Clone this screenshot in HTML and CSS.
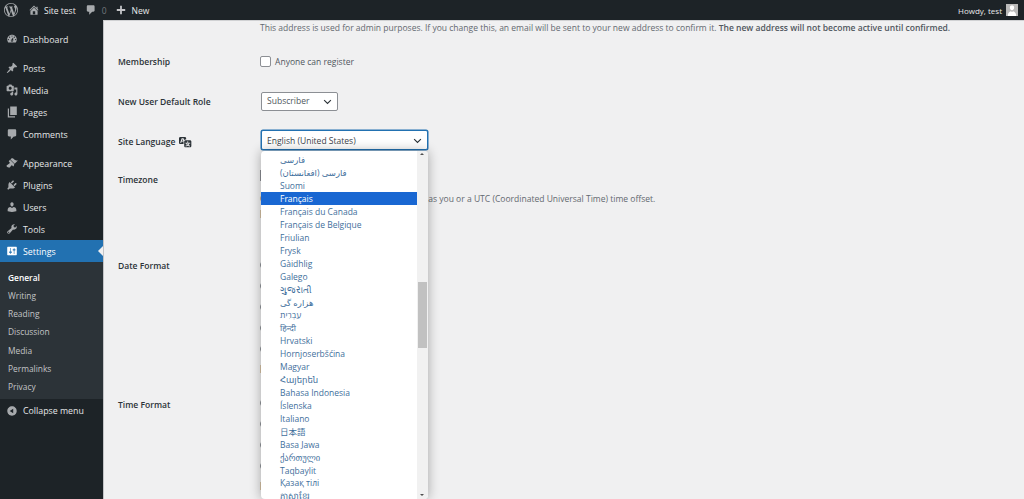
FILE: index.html
```html
<!DOCTYPE html>
<html lang="en">
<head>
<meta charset="utf-8">
<title>General Settings</title>
<link rel="stylesheet" href="styles.css">
</head>
<body>
<header class="adminbar">
  <svg class="bar-logo" viewBox="0 0 20 20"><path d="M20 10c0-5.51-4.49-10-10-10C4.48 0 0 4.49 0 10c0 5.52 4.48 10 10 10 5.51 0 10-4.48 10-10zM7.78 15.37L4.37 6.22c.55-.02 1.17-.08 1.17-.08.5-.06.44-1.13-.06-1.11 0 0-1.45.11-2.37.11-.18 0-.37 0-.58-.01C4.12 2.69 6.87 1.11 10 1.11c2.33 0 4.45.87 6.05 2.34-.68-.11-1.65.39-1.65 1.58 0 .74.45 1.36.9 2.1.35.61.55 1.36.55 2.46 0 1.49-1.4 5-1.4 5l-3.03-8.37c.54-.02.82-.17.82-.17.5-.05.44-1.25-.06-1.22 0 0-1.44.12-2.38.12-.87 0-2.33-.12-2.33-.12-.5-.03-.56 1.2-.06 1.22l.92.08 1.26 3.41zM17.41 10c.24-.64.74-1.87.43-4.25.7 1.29 1.05 2.71 1.05 4.25 0 3.29-1.73 6.24-4.4 7.78.97-2.59 1.94-5.2 2.92-7.78zM6.1 18.09C3.12 16.65 1.11 13.53 1.11 10c0-1.3.23-2.48.72-3.59C3.25 10.3 4.67 14.2 6.1 18.09zm4.03-6.63l2.58 6.98c-.86.29-1.76.45-2.71.45-.79 0-1.57-.11-2.29-.33.81-2.38 1.62-4.74 2.42-7.1z"/></svg>
  <span class="bar-item bar-site"><svg class="bar-ico" viewBox="0 0 20 20"><path d="M16 8.5l1.53 1.53-1.06 1.06L10 4.62l-6.47 6.47-1.06-1.06L10 2.5l4 4v-2h2v4zm-6-2.46l6 5.99V18H4v-5.97zM12 17v-5H8v5h4z"/></svg>Site test</span>
  <span class="bar-item bar-comments"><svg class="bar-ico" viewBox="0 0 20 20"><path d="M5 2h9c1.1 0 2 .9 2 2v7c0 1.1-.9 2-2 2h-2l-5 5v-5H5c-1.1 0-2-.9-2-2V4c0-1.1.9-2 2-2z"/></svg><span class="muted">0</span></span>
  <span class="bar-item bar-new"><svg class="bar-ico" viewBox="0 0 20 20"><path d="M17 8.5v3h-5.5V17h-3v-5.5H3v-3h5.5V3h3v5.5z"/></svg>New</span>
  <span class="howdy">Howdy, test<span class="avatar"><svg viewBox="0 0 20 20"><path d="M10 10.5c-2.4 0-3.6-2.4-3.6-4.6C6.4 3.7 7.8 2.6 10 2.6s3.6 1.1 3.6 3.3c0 2.2-1.2 4.6-3.6 4.6zM3 20c0-5 2.5-7.5 5-8l2 1.500 2-1.500c2.500.5 5 3 5 8z"/></svg></span></span>
</header>

<div class="shell">
  <nav class="sidebar">
    <a class="mi"><svg viewBox="0 0 20 20"><path d="M3.76 16h12.48c1.1-1.37 1.76-3.11 1.76-5 0-4.42-3.58-8-8-8s-8 3.58-8 8c0 1.89.66 3.63 1.76 5zM10 4c.55 0 1 .45 1 1s-.45 1-1 1-1-.45-1-1 .45-1 1-1zM6 6c.55 0 1 .45 1 1s-.45 1-1 1-1-.45-1-1 .45-1 1-1zm8 0c.55 0 1 .45 1 1s-.45 1-1 1-1-.45-1-1 .45-1 1-1zm-5.37 5.55L12 7v6c0 1.1-.9 2-2 2s-2-.9-2-2c0-.57.24-1.08.63-1.45zM4 10c.55 0 1 .45 1 1s-.45 1-1 1-1-.45-1-1 .45-1 1-1zm12 0c.55 0 1 .45 1 1s-.45 1-1 1-1-.45-1-1 .45-1 1-1zm-5 3c0-.55-.45-1-1-1s-1 .45-1 1 .45 1 1 1 1-.45 1-1z"/></svg>Dashboard</a>
    <a class="mi sep"><svg viewBox="0 0 20 20"><path d="M10.44 3.02l1.82-1.82 6.36 6.35-1.83 1.82c-1.05-.68-2.48-.57-3.41.36l-.75.75c-.92.93-1.04 2.35-.35 3.41l-1.83 1.82-2.41-2.41-2.8 2.79c-.42.42-3.38 2.71-3.8 2.29s1.86-3.39 2.28-3.81l2.79-2.79L4.1 9.36l1.83-1.82c1.05.69 2.48.57 3.4-.36l.75-.75c.93-.92 1.05-2.35.36-3.41z"/></svg>Posts</a>
    <a class="mi"><svg viewBox="0 0 20 20"><path d="M13 11V4c0-.55-.45-1-1-1h-1.67L9 1H5L3.67 3H2c-.55 0-1 .45-1 1v7c0 .55.45 1 1 1h10c.55 0 1-.45 1-1zM7 4.500c1.380 0 2.500 1.120 2.500 2.500S8.380 9.500 7 9.500 4.500 8.380 4.500 7 5.620 4.500 7 4.500zM14 6h5v10.500c0 1.380-1.120 2.500-2.500 2.500S14 17.880 14 16.500s1.120-2.500 2.500-2.500c.17 0 .34.02.5.05V9h-3V6zm-4 8.050V13h2v3.500c0 1.380-1.120 2.500-2.500 2.500S7 17.880 7 16.500 8.120 14 9.500 14c.17 0 .34.02.5.05z"/></svg>Media</a>
    <a class="mi"><svg viewBox="0 0 20 20"><path d="M7 1h11v14H7zM5 4v13h10v2H3V4z"/></svg>Pages</a>
    <a class="mi"><svg viewBox="0 0 20 20"><path d="M5 2h10c1.100 0 2 .9 2 2v8c0 1.100-.9 2-2 2h-2l-5 5v-5H5c-1.100 0-2-.9-2-2V4c0-1.100.9-2 2-2z"/></svg>Comments</a>
    <a class="mi sep"><svg viewBox="0 0 20 20"><path d="M14.480 11.060L7.410 3.990l1.500-1.500c.5-.56 2.300-.47 3.510.32 1.210.8 1.430 1.280 2.910 2.100 1.180.64 2.450 1.260 4.450.85zm-.71.71L6.700 4.700 4.930 6.470c-.39.39-.39 1.020 0 1.410l1.060 1.060c.39.39.39 1.030 0 1.420-.6.6-1.430 1.110-2.210 1.690-.35.26-.7.53-1.010.84C1.430 13.230.91 14.400.91 15.240 3 17.500 5.430 18 6.520 17.450c.29-.35.56-.7.82-1.050.58-.79 1.090-1.620 1.690-2.220.39-.39 1.030-.39 1.420 0l1.060 1.060c.39.39 1.020.39 1.410 0z"/></svg>Appearance</a>
    <a class="mi"><svg viewBox="0 0 20 20"><path d="M13.110 4.360L9.870 7.600 8 5.730l3.240-3.240c.35-.34 1.050-.2 1.560.32.52.51.66 1.210.31 1.550zm-8 1.770l.91-1.120 9.010 9.010-1.190.84c-.71.71-2.630 1.160-3.820 1.160H6.140L4.900 17.260c-.59.59-1.540.59-2.120 0-.59-.58-.59-1.530 0-2.120l1.240-1.240v-3.880c0-1.130.4-3.190 1.090-3.890zm7.260 3.970l3.240-3.240c.34-.35 1.040-.21 1.550.31.52.51.66 1.210.31 1.550l-3.240 3.250z"/></svg>Plugins</a>
    <a class="mi"><svg viewBox="0 0 20 20"><path d="M10 9.250c-2.270 0-2.730-3.440-2.730-3.440C7 4.020 7.820 2 9.970 2c2.160 0 2.980 2.020 2.710 3.810 0 0-.41 3.440-2.680 3.440zm0 2.570L12.720 10c2.390 0 4.520 2.330 4.520 4.530v2.490s-3.650 1.130-7.240 1.130c-3.650 0-7.240-1.130-7.240-1.130v-2.490c0-2.250 1.940-4.480 4.470-4.480z"/></svg>Users</a>
    <a class="mi"><svg viewBox="0 0 20 20"><path d="M16.680 9.770c-1.340 1.340-3.300 1.670-4.950.99l-5.410 6.520c-.99.99-2.590.99-3.580 0s-.99-2.590 0-3.570l6.520-5.420c-.68-1.650-.35-3.610.99-4.950 1.280-1.280 3.120-1.620 4.720-1.060l-2.890 2.890 2.820 2.820 2.860-2.870c.53 1.580.18 3.390-1.080 4.650zM3.810 16.210c.4.39 1.040.39 1.430 0 .4-.4.4-1.040 0-1.430-.39-.4-1.030-.4-1.430 0-.39.39-.39 1.030 0 1.430z"/></svg>Tools</a>
    <a class="mi active"><svg viewBox="0 0 20 20"><path d="M18 16V4c0-.55-.45-1-1-1H3c-.55 0-1 .45-1 1v12c0 .55.45 1 1 1h14c.55 0 1-.45 1-1zM8 11h1c.55 0 1 .45 1 1s-.45 1-1 1H8v1.500c0 .28-.22.5-.5.5s-.5-.22-.5-.5V13H6c-.55 0-1-.45-1-1s.45-1 1-1h1V5.500c0-.28.22-.5.5-.5s.5.22.5.5V11zm5-2h-1c-.55 0-1-.45-1-1s.45-1 1-1h1V5.500c0-.28.22-.5.5-.5s.5.22.5.5V7h1c.55 0 1 .45 1 1s-.45 1-1 1h-1v5.500c0 .28-.22.5-.5.5s-.5-.22-.5-.5V9z"/></svg>Settings</a>
    <div class="submenu">
      <a class="si current">General</a>
      <a class="si">Writing</a>
      <a class="si">Reading</a>
      <a class="si">Discussion</a>
      <a class="si">Media</a>
      <a class="si">Permalinks</a>
      <a class="si">Privacy</a>
    </div>
    <a class="mi"><svg viewBox="0 0 20 20"><path d="M10 2.160c4.330 0 7.840 3.510 7.840 7.840s-3.510 7.840-7.840 7.840S2.160 14.330 2.160 10 5.710 2.160 10 2.160zm2 11.720V6.120L6.180 9.970z"/></svg>Collapse menu</a>
  </nav>

  <main class="content">
    <p class="lead">This address is used for admin purposes. If you change this, an email will be sent to your new address to confirm it. <strong>The new address will not become active until confirmed.</strong></p>

    <div class="row r-member">
      <div class="label">Membership</div>
      <div class="field check-line"><span class="checkbox"></span>Anyone can register</div>
    </div>

    <div class="row r-role">
      <div class="label">New User Default Role</div>
      <div class="field"><div class="select role-select">Subscriber<svg class="chev" viewBox="0 0 12 8"><path d="M1.500 1.500L6 6l4.500-4.500"/></svg></div></div>
    </div>

    <div class="row r-lang">
      <div class="label">Site Language <svg class="lang-ico" viewBox="0 0 20 20"><path d="M11 7H9.490c-.63 0-1.250.3-1.590.7L7 5H4.130l-2.390 7h1.690l.74-2H7v4H2c-1.100 0-2-.9-2-2V5c0-1.100.9-2 2-2h7c1.100 0 2 .9 2 2v2zM6.510 9H4.490l1-2.930zM10 8h7c1.100 0 2 .9 2 2v7c0 1.100-.9 2-2 2h-7c-1.100 0-2-.9-2-2v-7c0-1.100.9-2 2-2zm7.250 5v-1.080h-3.170V9.750h-1.160v2.170H9.750V13h1.280c.11.85.56 1.850 1.280 2.620-.87.36-1.890.62-2.310.62-.01.02.22.97.2 1.460.84 0 2.210-.5 3.280-1.150 1.090.65 2.480 1.150 3.340 1.150-.02-.49.2-1.440.2-1.460-.43 0-1.490-.27-2.380-.63.7-.77 1.140-1.770 1.250-2.610h1.360zm-3.810 1.930c-.5-.46-.85-1.130-1.010-1.930h2.090c-.17.8-.51 1.470-1 1.930l-.04.03s-.03-.02-.04-.03z"/></svg></div>
      <div class="field lang-field">
        <div class="select lang-select">English (United States)<svg class="chev" viewBox="0 0 12 8"><path d="M1.500 1.500L6 6l4.500-4.500"/></svg></div>
        <div class="popup">
          <ul class="options">
            <li>فارسی</li>
            <li>فارسی (افغانستان)</li>
            <li>Suomi</li>
            <li class="selected">Français</li>
            <li>Français du Canada</li>
            <li>Français de Belgique</li>
            <li>Friulian</li>
            <li>Frysk</li>
            <li>Gàidhlig</li>
            <li>Galego</li>
            <li>ગુજરાતી</li>
            <li>هزاره گی</li>
            <li>עִבְרִית</li>
            <li>हिन्दी</li>
            <li>Hrvatski</li>
            <li>Hornjoserbšćina</li>
            <li>Magyar</li>
            <li>Հայերեն</li>
            <li>Bahasa Indonesia</li>
            <li>Íslenska</li>
            <li>Italiano</li>
            <li>日本語</li>
            <li>Basa Jawa</li>
            <li>ქართული</li>
            <li>Taqbaylit</li>
            <li>Қазақ тілі</li>
            <li>ភាសាខ្មែរ</li>
          </ul>
          <div class="scrollbar">
            <span class="arrow up"></span>
            <span class="thumb"></span>
            <span class="arrow down"></span>
          </div>
        </div>
      </div>
    </div>

    <div class="row r-zone">
      <div class="label">Timezone</div>
      <div class="field">
        <div class="zone-select"></div>
        <p class="zone-note">Choose either a city in the same timezone as you or a UTC (Coordinated Universal Time) time offset.</p>
        <span class="tick tan"></span>
      </div>
    </div>

    <div class="row r-date">
      <div class="label">Date Format</div>
      <div class="field radios">
        <span class="radio"></span><span class="radio"></span><span class="radio"></span><span class="radio"></span><span class="radio"></span><span class="tick tan"></span>
      </div>
    </div>

    <div class="row">
      <div class="label">Time Format</div>
      <div class="field radios">
        <span class="radio"></span><span class="radio"></span><span class="radio"></span><span class="radio"></span><span class="tick tan"></span>
      </div>
    </div>
  </main>
</div>
</body>
</html>
```

FILE: styles.css
```css
* { box-sizing: border-box; }
html, body { margin: 0; height: 499px; overflow: hidden; }
body {
  background: #f0f0f1;
  color: #3c434a;
  font-family: "Open Sans", "Noto Sans", "DejaVu Sans", "Noto Sans CJK JP", sans-serif;
  font-size: 8.5px;
}
svg { fill: currentColor; display: block; }

/* admin bar */
.adminbar {
  height: 20px;
  background: #1d2327;
  color: #f0f0f1;
  display: flex;
  align-items: center;
  padding: 0 6px 0 4px;
  font-size: 8.500px;
}
.bar-logo { width: 14px; height: 14px; color: #a7aaad; margin-right: 10px; }
.bar-item { display: flex; align-items: center; gap: 5px; color: #e8e9ea; }
.bar-ico { width: 12px; height: 12px; color: #a7aaad; flex: none; }
.bar-site { margin-right: 9px; gap: 4px; }
.bar-comments { margin-right: 8px; }
.bar-new .bar-ico { color: #c3c4c7; }
.muted { color: #72777c; }
.howdy { margin-left: auto; display: flex; align-items: center; gap: 4px; font-size: 8px; color: #e8e9ea; }
.avatar { width: 12px; height: 12px; background: #b9b9b9; color: #fff; overflow: hidden; }
.avatar svg { width: 12px; height: 12px; }

.shell { display: flex; height: 479px; }

/* sidebar */
.sidebar { width: 103px; flex: none; background: #1d2327; padding-top: 8px; }
.mi {
  position: relative;
  display: flex;
  align-items: center;
  height: 22px;
  padding: 1.500px 0 0 6px;
  gap: 5px;
  color: #e4e6e8;
  font-size: 8.800px;
}
.mi svg { width: 12px; height: 12px; margin-top: -1.500px; color: #a7aaad; flex: none; }
.sep { margin-top: 7px; }
.active { background: #2271b1; color: #fff; }
.active svg { color: #fff; }
.active::after {
  content: "";
  position: absolute;
  right: 0;
  top: 6px;
  border: 5px solid transparent;
  border-left-width: 0;
  border-right-color: #f0f0f1;
}
.submenu { background: #2c3338; padding: 6.500px 0 2.750px; margin-bottom: .500px; }
.si { display: block; height: 18.250px; line-height: 18.250px; padding-left: 8px; color: #c3c4c7; font-size: 8.400px; }
.si.current { color: #fff; font-weight: 600; }

/* main */
.content { flex: 1; min-width: 0; padding-left: 14px; border-left: 1px solid #c3c4c7; border-top: 1px solid #d0d1d3; font-size: 8.540px; }
.lead { margin: 0 0 16px 142px; height: 14px; line-height: 14px; white-space: nowrap; color: #646970; }
.lead strong { font-weight: 600; color: #50575e; }
.row { display: flex; }
.label { width: 142px; flex: none; height: 20px; padding-top: 2px; display: flex; align-items: center; gap: 4px; font-weight: 600; color: #2c3338; }
.lang-ico { width: 13px; height: 13px; margin-top: -1px; }
.field { flex: 1; min-width: 0; position: relative; }
.r-member { height: 40px; }
.r-role { height: 40px; }
.r-lang { height: 38px; }
.r-zone { height: 86px; }
.r-date { height: 139px; }

.check-line { display: flex; align-items: center; height: 20px; padding-top: 2px; gap: 4px; color: #50575e; }
.checkbox { width: 11px; height: 11px; margin-top: -2px; border: 1px solid #8c8f94; border-radius: 2px; background: #fff; }

.select {
  position: relative;
  margin-left: 1px;
  padding-left: 5px;
  background: #fff;
  border: 1px solid #8c8f94;
  border-radius: 2px;
  color: #50575e;
}
.role-select { width: 77px; height: 19px; line-height: 17px; margin-top: 1px; }
.lang-select { width: 167px; height: 20px; line-height: 20px; margin-top: -1px; border-color: #2271b1; box-shadow: 0 0 0 .5px #2271b1; color: #3c434a; }
.chev { position: absolute; right: 5px; width: 9px; height: 6px; fill: none; stroke: #2c3338; stroke-width: 1.500; }
.role-select .chev { top: 6px; }
.lang-select .chev { top: 7px; }

.popup {
  position: absolute;
  z-index: 5;
  top: 20px;
  left: 1px;
  width: 167px;
  height: 348px;
  display: flex;
  background: #fff;
  border-radius: 4px;
  box-shadow: 0 0 12px rgba(0, 0, 0, .32);
  overflow: hidden;
  font-size: 8.500px;
}
.options { list-style: none; margin: 0; padding: 2.400px 0 0; width: 156px; flex: none; color: #3f6f9c; }
.options li { height: 12.930px; line-height: 14.500px; padding-left: 19px; white-space: nowrap; }
.options .selected { background: #1967d2; color: #fff; }
.scrollbar { flex: 1; position: relative; background: #f1f1f1; }
.thumb { position: absolute; left: 1px; right: 1px; top: 131px; height: 66px; background: #c1c1c1; }
.arrow { position: absolute; left: 3px; border: 2.500px solid transparent; }
.up { top: 2px; border-top-width: 0; border-bottom-color: #505050; }
.down { bottom: 3px; border-bottom-width: 0; border-top-color: #505050; }

.zone-select { width: 160px; height: 11px; margin-top: 1px; background: #fff; border: 1px solid #8c8f94; }
.zone-note { margin: 11px 0 0; height: 14px; line-height: 14px; white-space: nowrap; color: #646970; }
.tick { display: block; width: 1px; height: 8px; }
.tan { background: #d8c4a6; }
.r-zone .tick { margin-top: 4px; }
.radios { padding-top: 4px; display: flex; flex-direction: column; gap: 11px; align-items: flex-start; }
.r-date .radios { padding-top: 5px; }
.radio { width: 10px; height: 10px; border: 1px solid #8c8f94; border-radius: 50%; background: #fff; flex: none; }
```
